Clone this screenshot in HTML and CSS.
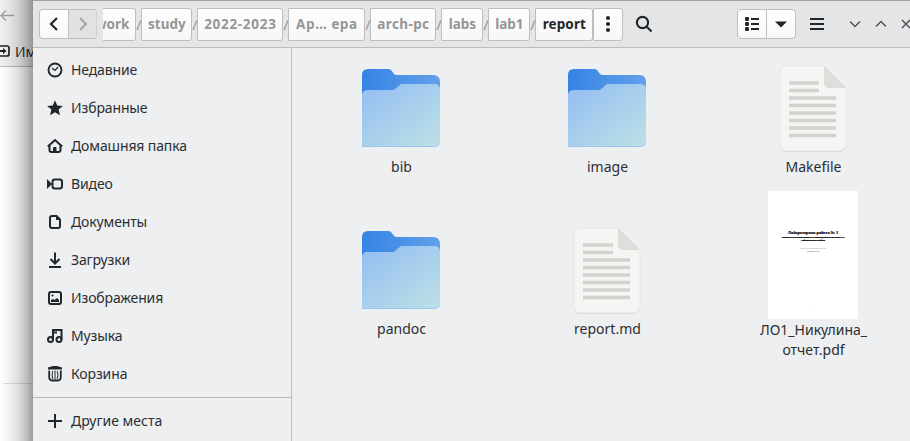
FILE: index.html
```html
<!DOCTYPE html>
<html lang="ru">
<head>
<meta charset="utf-8">
<title>report</title>
<link rel="stylesheet" href="styles.css">
</head>
<body>
<svg class="defs" width="0" height="0" aria-hidden="true">
  <defs>
    <linearGradient id="back" x1="0" y1="0" x2="1" y2="0"><stop offset="0" stop-color="#3584e4"/><stop offset="1" stop-color="#62a0ea"/></linearGradient>
    <linearGradient id="front" x1="0.15" y1="0.1" x2="1" y2="1"><stop offset="0" stop-color="#99c1f1"/><stop offset="1" stop-color="#bce1e6"/></linearGradient>
    <symbol id="folder" viewBox="0 0 80 80">
      <path d="M1 78V7q0-6 6-6h20q2 0 3 1l3 4q1 1 3 1h36q7 0 7 7v58q0 6-6 6z" fill="url(#back)"/>
      <path d="M1 79V28q0-6 6-6h26l6-5q1-1 3-1h31q6 0 6 6v51q0 6-6 6z" fill="#9cc4f0"/>
      <path d="M1 78V28q0-6 6-6h26l6-5q1-1 3-1h31q6 0 6 6v50q0 6-6 6z" fill="url(#front)"/>
    </symbol>
    <symbol id="paper" viewBox="0 0 70 88">
      <path d="M8 2h37l22 22v56q0 7-7 7H8q-7 0-7-7V9q0-7 7-7z" fill="#d8d9d9"/>
      <path d="M8 1h37l22 22v56q0 7-7 7H8q-7 0-7-7V8q0-7 7-7z" fill="#f6f5f4" stroke="#e3e3e2" stroke-width=".7"/>
      <path d="M45 1l22 22H51q-6 0-6-6z" fill="#deddda"/>
      <path d="M10 18h30M10 25.500h30M10 33h47M10 40.500h47M10 48h47M10 55.500h47M10 63h47M10 70.500h47" stroke="#d3d2cf" stroke-width="3.700"/>
    </symbol>
  </defs>
</svg>
<div class="desktop">
  <div class="behind">
    <div class="behind-head">
      <svg class="back-arrow" width="16" height="14" viewBox="0 0 16 14"><path d="M14 7.500H1M6 2.500L1 7.500l5 5" fill="none" stroke="#a0a1a3" stroke-width="1.300"/></svg>
      <div class="import"><svg width="10" height="12" viewBox="0 0 10 12"><path d="M0 1h7q2 0 2 2v6q0 2-2 2H0" fill="none" stroke="#222" stroke-width="1.700"/><path d="M0 6h4" stroke="#222" stroke-width="2"/><path d="M3 3l3.500 3L3 9z" fill="#222"/></svg><span>Им</span></div>
    </div>
    <div class="behind-body"></div>
  </div>
  <main class="window">
    <header class="bar">
      <div class="nav">
        <button class="on"><svg width="16" height="16" viewBox="0 0 16 16"><path d="M11 2L5 8l6 6" fill="none" stroke="#222629" stroke-width="2.200"/></svg></button>
        <button class="off"><svg width="16" height="16" viewBox="0 0 16 16"><path d="M5 2l6 6-6 6" fill="none" stroke="#a1a4a5" stroke-width="2"/></svg></button>
      </div>
      <nav class="path">
        <span class="crumb work">work</span><i>/</i>
        <span class="crumb w-study">study</span><i>/</i>
        <span class="crumb w-year">2022-2023</span><i>/</i>
        <span class="crumb w-arch">Ар… ера</span><i>/</i>
        <span class="crumb w-pc">arch-pc</span><i>/</i>
        <span class="crumb w-lab">labs</span><i>/</i>
        <span class="crumb w-lab">lab1</span><i>/</i>
        <span class="crumb current">report</span>
        <span class="crumb dots"><svg width="6" height="18" viewBox="0 0 6 18"><g fill="#222629"><circle cx="3" cy="3" r="2.100"/><circle cx="3" cy="9" r="2.100"/><circle cx="3" cy="15" r="2.100"/></g></svg></span>
      </nav>
      <svg class="search" width="18" height="18" viewBox="0 0 18 18"><g fill="none" stroke="#222629" stroke-width="2.100"><circle cx="7.500" cy="7.500" r="5.600"/><path d="M11.500 11.500l5 5"/></g></svg>
      <div class="view">
        <span class="view-list"><svg width="16" height="16" viewBox="0 0 16 16"><g fill="#222629"><rect x="1" y="1" width="4" height="4" rx="1.300"/><rect x="1" y="6" width="4" height="4" rx="1.300"/><rect x="1" y="11" width="4" height="4" rx="1.300"/><path d="M7 2h8v2H7zM7 7h8v2H7zM7 12h8v2H7z"/></g></svg></span>
        <span class="view-drop"><svg width="12" height="7" viewBox="0 0 12 7"><path d="M0 0.500h12l-6 6z" fill="#222629"/></svg></span>
      </div>
      <svg class="menu" width="14" height="14" viewBox="0 0 14 14"><path d="M0 2h14M0 7h14M0 12h14" stroke="#222629" stroke-width="2"/></svg>
      <div class="controls">
        <svg width="12" height="8" viewBox="0 0 12 8"><path d="M1 1.500l5 5 5-5" /></svg>
        <svg width="12" height="8" viewBox="0 0 12 8"><path d="M1 6.500l5-5 5 5" /></svg>
        <svg width="10" height="10" viewBox="0 0 10 10"><path d="M1 1l8 8M9 1L1 9" /></svg>
      </div>
    </header>
    <div class="content">
      <aside class="sidebar">
        <ul class="places">
          <li><svg viewBox="0 0 16 16"><circle cx="8" cy="8" r="6.500" fill="none" stroke-width="1.900"/><path d="M5 6l3 2.500L11 5" fill="none" stroke-width="1.200"/></svg><span>Недавние</span></li>
          <li><svg viewBox="0 0 16 16"><path class="solid" d="M8 .2l2.200 5.300 5.700.4-4.300 3.700 1.400 5.700L8 12.300l-5 3 1.400-5.700L.1 5.900l5.700-.4z"/></svg><span>Избранные</span></li>
          <li><svg viewBox="0 0 16 16"><path d="M.8 8.500L8 2.100l7.200 6.400M2.500 7.500V12q0 2 2 2h7q2 0 2-2V7.500" fill="none" stroke-width="2"/><path class="solid" d="M6 14v-4q0-1 1-1h1.500q1 0 1 1v4z"/></svg><span>Домашняя папка</span></li>
          <li><svg viewBox="0 0 16 16"><rect x="5.500" y="3.500" width="9.500" height="9" rx="2.300" fill="none" stroke-width="2"/><path class="solid" d="M0 3l5 5-5 5z"/></svg><span>Видео</span></li>
          <li><svg viewBox="0 0 16 16"><path d="M5 1.900h4.500L13 5.400V12q0 2-2 2H5q-2 0-2-2V3.900q0-2 2-2z" fill="none" stroke-width="2"/><path class="solid" d="M9 1v5h5z"/></svg><span>Документы</span></li>
          <li><svg viewBox="0 0 16 16"><path d="M8 .5v11M3.500 7L8 11.500 12.500 7M2 15h12" fill="none" stroke-width="2"/></svg><span>Загрузки</span></li>
          <li><svg viewBox="0 0 16 16"><rect x="2" y="2" width="12" height="12" rx="2" fill="none" stroke-width="2"/><path class="solid" d="M4 12v-2l2-1 1.500 1 2.500-2 2 2v2z"/><circle class="solid" cx="5.500" cy="5.500" r="1.100"/></svg><span>Изображения</span></li>
          <li><svg viewBox="0 0 16 16"><g fill="none" stroke-width="2"><circle cx="3.500" cy="11.500" r="2.500"/><circle cx="12" cy="11.500" r="2.500"/><path d="M6 11.500V2h8.500v9.500M6 4.500h4"/></g></svg><span>Музыка</span></li>
          <li><svg viewBox="0 0 16 16"><path class="solid" d="M1 1.500L6 0h4l5 1.500V3.500H1z"/><path d="M2.200 4.500v6.500q0 3.500 3 3.500h5.600q3 0 3-3.500V4.500" fill="none" stroke-width="1.800"/><path d="M5.800 5q-1.500 4 0 8M8 4.500v9M10.200 5q1.500 4 0 8" fill="none" stroke-width="1"/></svg><span>Корзина</span></li>
        </ul>
        <div class="other"><svg viewBox="0 0 16 16"><path d="M8 1v14M1 8h14" stroke-width="2"/></svg><span>Другие места</span></div>
      </aside>
      <section class="files">
        <figure><svg width="80" height="80"><use href="#folder"/></svg><figcaption>bib</figcaption></figure>
        <figure><svg width="80" height="80"><use href="#folder"/></svg><figcaption>image</figcaption></figure>
        <figure class="doc"><svg width="68" height="88" viewBox="0 0 68 88"><use href="#paper" width="70" height="88"/></svg><figcaption>Makefile</figcaption></figure>
        <figure><svg width="80" height="80"><use href="#folder"/></svg><figcaption>pandoc</figcaption></figure>
        <figure class="doc"><svg width="68" height="88" viewBox="0 0 68 88"><use href="#paper" width="70" height="88"/></svg><figcaption>report.md</figcaption></figure>
        <figure class="pdf"><div class="page">
          <b class="page-title">Лабораторная работа № 1</b>
          <b class="page-sub">Архитектура компьютеров и операционной системы ОС</b>
          <b class="page-sub">Лабораторная работа</b>
          <span class="page-author">Никулина Ксения Ильинична</span>
          <span class="page-group">НММбд-02-22</span>
          <span class="page-num">1</span>
        </div><figcaption>ЛО1_Никулина_<br>отчет.pdf</figcaption></figure>
      </section>
    </div>
  </main>
</div>
</body>
</html>
```
FILE: styles.css
```css
* { box-sizing: border-box; }
body { margin: 0; font-family: "Noto Sans", sans-serif; font-size: 14px; color: #2b2e31; overflow: hidden; }
svg { display: block; flex: none; }
.defs { position: absolute; }
.desktop { display: flex; width: 910px; height: 441px; overflow: hidden; background: #fff; }
.behind { position: relative; width: 33px; flex: none; overflow: hidden; }
.behind::after { content: ""; position: absolute; inset: 0; background: linear-gradient(to right, rgba(0,0,0,0) 0, rgba(0,0,0,.03) 20%, rgba(0,0,0,.13) 55%, rgba(0,0,0,.25) 80%, rgba(0,0,0,.39) 100%); }
.behind-head { height: 67px; background: #f0f0f1; border-bottom: 1px solid #bbb; padding-top: 8px; }
.import { display: flex; align-items: center; gap: 5px; height: 20px; margin-top: 19px; white-space: nowrap; }
.behind-body { height: 317px; margin-left: 3px; border-bottom: 1px solid #e0e0e0; }
.window { width: 877px; flex: none; display: flex; flex-direction: column; border-top: 1px solid #a3a3a6; background: #eeeff1; }
.bar { display: flex; align-items: center; height: 47px; background: #e4e5e7; border-bottom: 1px solid #babcbe; padding-left: 6px; flex: none; }
.nav { display: flex; width: 59px; height: 30px; border: 1px solid #bcbec0; border-right-color: #cfd1d2; border-radius: 4px; overflow: hidden; }
.nav button { display: flex; align-items: center; justify-content: center; flex: 1; border: 0; padding: 0; background: #e1e2e3; }
.nav .on { background: linear-gradient(#fff, #f8f8f8); border-right: 1px solid #bcbec0; }
.path { display: flex; align-items: center; margin-left: 6px; height: 33px; }
.crumb { display: flex; align-items: center; justify-content: center; height: 33px; border: 1px solid #bcbec0; border-radius: 1px 3px 3px 1px; background: linear-gradient(#fdfdfd, #f7f7f8); color: #959697; font-weight: 700; font-size: 13.5px; white-space: nowrap; overflow: hidden; }
.path i { width: 5px; font-style: normal; color: #96989a; font-size: 15px; text-align: center; }
.work { width: 32px; border-left: 0; border-radius: 0 3px 3px 0; justify-content: flex-end; padding-right: 6px; }
.path .work { width: 33px; }
.w-study { width: 51px; }
.w-year { width: 86px; letter-spacing: .7px; }
.w-arch { width: 77px; letter-spacing: .6px; }
.w-pc { width: 66px; letter-spacing: .4px; }
.w-lab { width: 42px; }
.current { width: 58px; color: #222629; letter-spacing: .1px; }
.dots { width: 30px; }
.search { margin-left: 12px; }
.view { display: flex; width: 59px; height: 30px; margin-left: 84px; border: 1px solid #bcbec0; border-radius: 4px; background: linear-gradient(#fff, #f8f8f8); }
.view span { display: flex; align-items: center; justify-content: center; flex: 1; }
.view .view-list { border-right: 1px solid #bcbec0; }
.menu { margin-left: 14px; }
.controls { display: flex; align-items: center; gap: 14px; margin-left: 25px; width: 62px; overflow: hidden; }
.controls path { fill: none; stroke: #4a4d50; stroke-width: 1.3; }
.content { display: flex; flex: 1; }
.sidebar { width: 259px; flex: none; border-right: 1px solid #b9bbbe; }
.places { list-style: none; margin: 0; padding: 3px 0 4px; }
.places li, .other { display: flex; align-items: center; gap: 8px; height: 38px; padding-left: 14px; white-space: nowrap; }
.places svg, .other svg { width: 16px; height: 16px; stroke: #222629; }
.places span { padding-bottom: 2px; letter-spacing: -.13px; }
.solid { fill: #222629; stroke: none; }
.other { height: 46px; border-top: 1px solid #b9bbbe; }
.files { display: grid; grid-template-columns: repeat(3, 206px); grid-template-rows: 162px 162px; padding-left: 6px; padding-top: 11px; }
figure { margin: 0; display: flex; flex-direction: column; align-items: center; padding-top: 9px; }
figcaption { text-align: center; line-height: 19px; margin-top: 9px; padding-left: 1px; white-space: nowrap; }
.doc { padding-top: 6px; }
.doc figcaption { margin-top: 4px; }
.pdf { padding-top: 0; margin-top: -30px; }
.pdf figcaption { margin-top: 1px; line-height: 19.5px; }
.page { width: 90px; height: 128px; flex: none; background: #fff; display: flex; flex-direction: column; align-items: center; padding-top: 39px; font-family: "Liberation Serif", serif; white-space: nowrap; overflow: hidden; color: #222; }
.page-title { font-size: 4.3px; line-height: 6px; text-shadow: 0 0 .3px #222; }
.page-sub { font-size: 2.5px; line-height: 3px; color: #000; text-shadow: 0 0 .4px #000, 0 0 .4px #000; }
.page-author { font-size: 2.1px; line-height: 3px; margin-top: 5px; color: #777; }
.page-group { font-size: 2px; line-height: 3px; color: #333; }
.page-num { font-size: 2.5px; line-height: 3px; margin-top: 54px; color: #777; }
```
